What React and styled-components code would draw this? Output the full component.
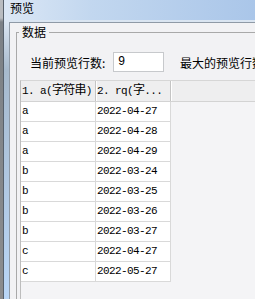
import styled, { createGlobalStyle } from "styled-components";

const GlobalStyle = createGlobalStyle`
  html, body {
    margin: 0;
    padding: 0;
  }
  body {
    background: #8a8c8f;
    overflow: hidden;
    font-family: "Noto Sans CJK SC", sans-serif;
    color: #000;
  }
`;

const Screen = styled.div`
  display: flex;
  width: 255px;
  height: 299px;
  overflow: hidden;
`;

const BackWindow = styled.div`
  width: 3px;
  flex-shrink: 0;
  background: linear-gradient(#b9bcc0, #b9bcc0 18px, #7c8186 22px, #8b8c8e);
`;

const Window = styled.div`
  flex: 1;
  min-width: 0;
  display: flex;
  flex-direction: column;
  border-left: 1px solid #57616c;
`;

const TitleBar = styled.div`
  height: 20px;
  flex-shrink: 0;
  padding-left: 6px;
  background: linear-gradient(to right, #dbe7f5 0%, #c2d7ef 35%, #aac6e9 100%);
  font-size: 12px;
  line-height: 15px;
`;

const Frame = styled.div`
  flex: 1;
  min-height: 0;
  display: flex;
  padding: 2px 0 0 5px;
  background: linear-gradient(#dae5f1 0, #dae5f1 2px, #a7bacd 50px, #b9d6f7 100%);
`;

const Client = styled.div`
  flex: 1;
  min-width: 0;
  overflow: hidden;
  border-top: 1px solid #8f9aa6;
  border-left: 1px solid #8f9aa6;
  background: #f2f2f4;
  padding: 2px 0 0 6px;
`;

const GroupBox = styled.fieldset`
  margin: 0;
  padding: 0;
  width: 320px;
  min-height: 320px;
  border: 1px solid #a9a9a9;
`;

const GroupLegend = styled.legend`
  margin-left: 2px;
  padding: 0 3px;
  font-size: 12px;
  line-height: 14px;
`;

const OptionRow = styled.div`
  display: flex;
  align-items: center;
  margin-top: 13px;
  padding-left: 13px;
  font-size: 12px;
  white-space: nowrap;
`;

const OptionLabel = styled.span`
  width: 83px;
  flex-shrink: 0;
`;

const CountInput = styled.div`
  box-sizing: border-box;
  width: 51px;
  height: 20px;
  flex-shrink: 0;
  border: 1px solid #c7c9cc;
  background: #fff;
  padding-left: 4px;
  font-family: "Liberation Mono", monospace;
  font-size: 12px;
  line-height: 18px;
`;

const MaxLabel = styled.span`
  margin-left: 16px;
`;

const TableBox = styled.div`
  margin: 8px 0 0 3px;
  min-height: 230px;
  border-top: 1px solid #d6d6d6;
  border-left: 1px solid #bdbdbd;
  background: #f4f4f6;
  font-family: "Liberation Mono", "Noto Sans CJK SC", monospace;
  font-size: 11px;
  letter-spacing: -0.6px;
`;

const HeaderRow = styled.div`
  display: flex;
  height: 20px;
  background: #eeeeef;
  border-bottom: 1px solid #d3d3d3;
`;

const HeaderCell = styled.div`
  width: 75px;
  flex-shrink: 0;
  padding-left: 1px;
  box-sizing: border-box;
  border-right: 1px solid #c4c4c4;
  box-shadow: 1px 0 0 #ffffff;
  line-height: 20px;
  white-space: nowrap;
  overflow: hidden;
`;

const Wide = styled.span`
  font-size: 12px;
  letter-spacing: -0.8px;
`;

const DataRow = styled.div`
  display: flex;
`;

const Cell = styled.div`
  width: 75px;
  height: 20px;
  flex-shrink: 0;
  box-sizing: border-box;
  padding-left: 1px;
  background: #fff;
  border-right: 1px solid #d9d9d9;
  border-bottom: 1px solid #d9d9d9;
  line-height: 19px;
`;

const ROWS = [
  ["a", "2022-04-27"],
  ["a", "2022-04-28"],
  ["a", "2022-04-29"],
  ["b", "2022-03-24"],
  ["b", "2022-03-25"],
  ["b", "2022-03-26"],
  ["b", "2022-03-27"],
  ["c", "2022-04-27"],
  ["c", "2022-05-27"],
];

export default function App() {
  return (
    <Screen>
      <GlobalStyle />
      <BackWindow />
      <Window>
        <TitleBar>预览</TitleBar>
        <Frame>
          <Client>
            <GroupBox>
              <GroupLegend>数据</GroupLegend>
              <OptionRow>
                <OptionLabel>当前预览行数:</OptionLabel>
                <CountInput>9</CountInput>
                <MaxLabel>最大的预览行数</MaxLabel>
              </OptionRow>
              <TableBox>
                <HeaderRow>
                  <HeaderCell>
                    1. a(<Wide>字符串</Wide>)
                  </HeaderCell>
                  <HeaderCell>
                    2. rq(<Wide>字</Wide>...
                  </HeaderCell>
                </HeaderRow>
                {ROWS.map((row, i) => (
                  <DataRow key={i}>
                    <Cell>{row[0]}</Cell>
                    <Cell>{row[1]}</Cell>
                  </DataRow>
                ))}
              </TableBox>
            </GroupBox>
          </Client>
        </Frame>
      </Window>
    </Screen>
  );
}
